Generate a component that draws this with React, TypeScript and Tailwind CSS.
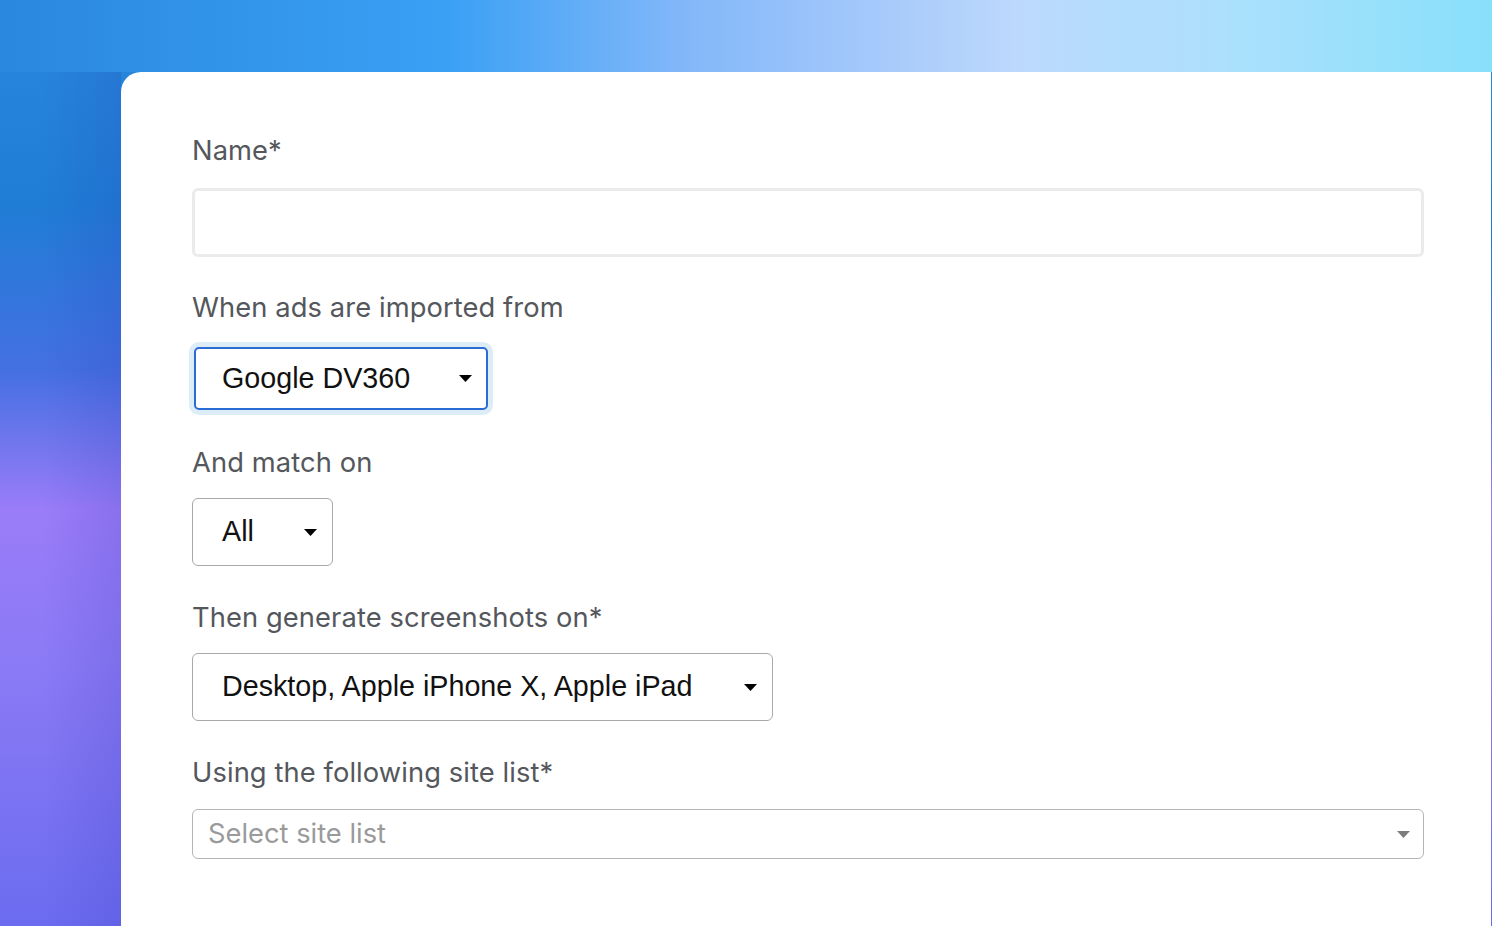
import React from "react";

const labelFont = "font-['Inter','Noto_Sans',sans-serif]";
const fieldFont = "font-['Liberation_Sans',Arial,sans-serif]";

function Caret({ className = "" }: { className?: string }) {
  return (
    <svg width="13" height="7" viewBox="0 0 13 7" className={className} aria-hidden>
      <path d="M0 0h13L6.5 7z" fill="currentColor" />
    </svg>
  );
}

function Label({ children }: { children: React.ReactNode }) {
  return (
    <div className={`${labelFont} text-[27.3px] leading-[36px] text-[#54575c] tracking-[0.1px]`}>{children}</div>
  );
}

function SelectBox({
  value,
  width,
  focused = false,
}: {
  value: string;
  width: string;
  focused?: boolean;
}) {
  return (
    <div
      className={
        focused
          ? `${width} ml-[2px] flex h-[63px] items-center justify-between rounded-[5px] border-2 border-[#2a6bd4] bg-white pl-[26px] pr-[14px] shadow-[0_0_0_5px_#dcedf8]`
          : `${width} flex h-[68px] items-center justify-between rounded-[6px] border border-[#a9a9a9] bg-white pl-[29px] pr-[15px]`
      }
    >
      <span className={`${fieldFont} text-[28.7px] text-[#111]`}>{value}</span>
      <Caret className="text-black" />
    </div>
  );
}

export default function App() {
  return (
    <div className="flex h-screen w-full flex-col overflow-hidden bg-[linear-gradient(to_right,#2a88de_0%,#3aa0f4_30%,#7fb6f9_45%,#a9cbfb_60%,#bcd9fc_68%,#ace0fc_82%,#88e0fb_100%),linear-gradient(to_right,transparent_35%,rgba(40,40,170,0.14)_100%),linear-gradient(to_bottom,#2a88de_0%,#1f7dd6_22%,#4470e2_40%,#9a7cf8_55%,#8b7af5_72%,#6b6cf0_100%)] bg-no-repeat bg-[size:100%_72px,121px_100%,100%_100%]">
      <div className="h-[72px] shrink-0" />
      <div className="flex min-h-0 flex-1 pl-[121px] pr-[1px]">
        <main className="flex-1 rounded-tl-[20px] bg-white pl-[71px] pr-[67px] pt-[61px]">
          <Label>Name*</Label>
          <input
            type="text"
            className="mt-[19px] block h-[69px] w-full rounded-[6px] border-[3px] border-[#ebebeb] bg-white outline-none"
          />

          <div className="mt-[33px]">
            <Label>When ads are imported from</Label>
          </div>
          <div className="mt-[21px]">
            <SelectBox value="Google DV360" width="w-[294px]" focused />
          </div>

          <div className="mt-[35px]">
            <Label>And match on</Label>
          </div>
          <div className="mt-[17px]">
            <SelectBox value="All" width="w-[141px]" />
          </div>

          <div className="mt-[34px]">
            <Label>Then generate screenshots on*</Label>
          </div>
          <div className="mt-[17px]">
            <SelectBox value="Desktop, Apple iPhone X, Apple iPad" width="w-[581px]" />
          </div>

          <div className="mt-[34px]">
            <Label>Using the following site list*</Label>
          </div>
          <div className="mt-[18px] flex h-[50px] w-full items-center justify-between rounded-[6px] border border-[#b5b5b5] bg-white pl-[15px] pr-[13px]">
            <span className={`${labelFont} text-[27.3px] text-[#9a9a9a]`}>Select site list</span>
            <Caret className="text-[#7d7d7d]" />
          </div>
        </main>
      </div>
    </div>
  );
}
